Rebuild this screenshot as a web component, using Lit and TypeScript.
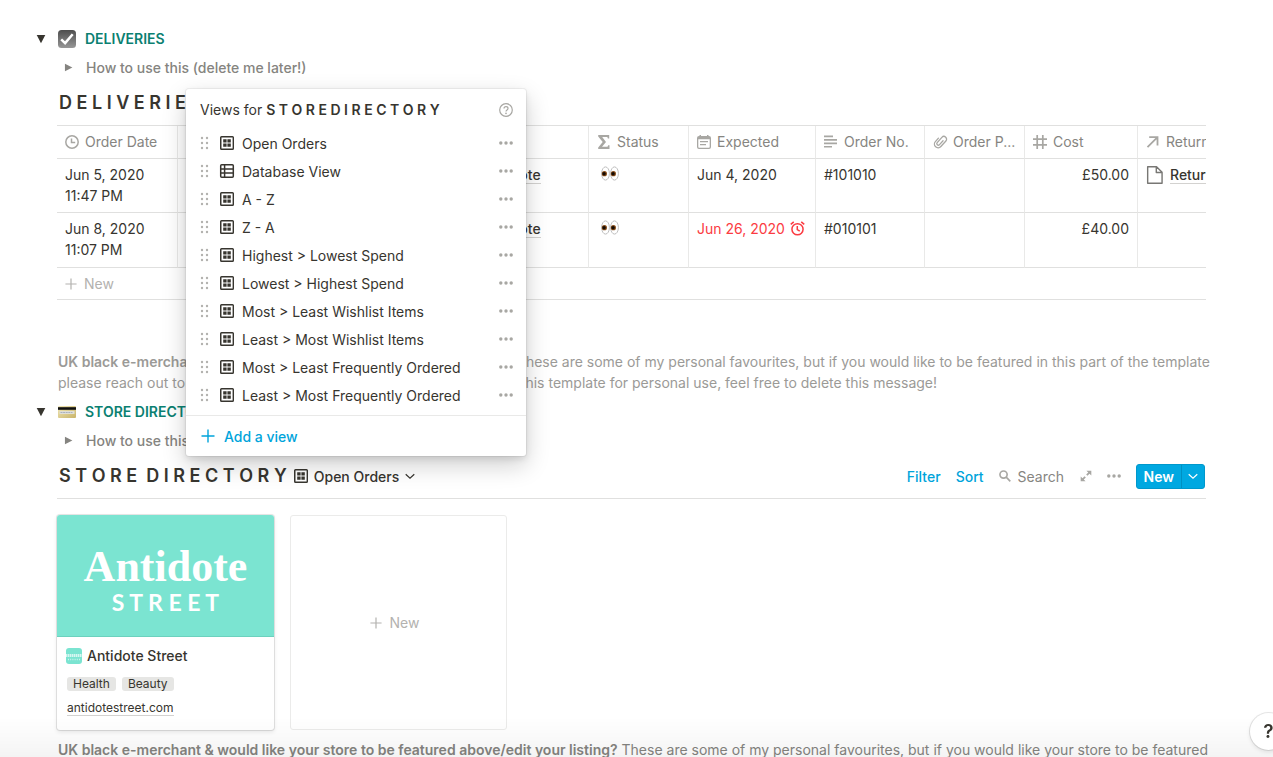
import { LitElement, html, svg, css, nothing } from "lit";
import { customElement, property, state } from "lit/decorators.js";

const glyphs: Record<string, unknown> = {
  clock: svg`<g fill="none" stroke="currentColor" stroke-width="1.5"><circle cx="7" cy="7" r="6.2"/><path d="M6.5 3.5v4h3.7"/></g>`,
  sigma: svg`<path fill="currentColor" d="M1.2 0h11v3.4h-1.3l-.6-1.3H5.2L9 6.9 5 11.7h5.5l.7-1.5h1.3V14H1.2v-1.6L5.7 7 1.2 1.6z"/>`,
  calendar: svg`<path fill="currentColor" fill-rule="evenodd" d="M2.5 0H4v1h6V0h1.500v1H12a2 2 0 0 1 2 2v9a2 2 0 0 1-2 2H2a2 2 0 0 1-2-2V3a2 2 0 0 1 2-2h.5zM1.300 4.300v7.800c0 .4.300.7.700.7h10c.4 0 .7-.3.7-.7V4.300zM3 6h8v1.200H3zm0 3h6v1.200H3z"/>`,
  text: svg`<path fill="currentColor" d="M0 1h9v1.700H0zM0 4.500h13v1.700H0zM0 8h13v1.700H0zM0 11.400h8v1.700H0z" transform="translate(0 -.5)"/>`,
  clip: svg`<g fill="none" stroke="currentColor" stroke-width="1.300" stroke-linecap="round" transform="rotate(42 7 7)"><path d="M3.300 5.200v4.600a3.700 3.700 0 0 0 7.400 0V2.300a2.700 2.700 0 0 0-5.400 0v7a1.500 1.500 0 0 0 3.100 0V4"/></g>`,
  hash: svg`<path fill="none" stroke="currentColor" stroke-width="1.700" d="M4.200 0v14M9.800 0v14M0 4.200h14M0 9.800h14"/>`,
  arrow: svg`<path fill="none" stroke="currentColor" stroke-width="1.800" d="M3.200 2.200h8.300v8.300M11.300 2.400L1.500 12.200"/>`,
  gallery: svg`<path fill="currentColor" fill-rule="evenodd" d="M1.500 0h11A1.500 1.500 0 0 1 14 1.500v11a1.500 1.500 0 0 1-1.500 1.500h-11A1.500 1.500 0 0 1 0 12.500v-11A1.500 1.500 0 0 1 1.500 0zm0 1.400v11.200h11.100V1.400z"/><path fill="currentColor" d="M3.200 3.200h3.400v3.400H3.200zM7.400 3.200h3.400v3.400H7.400zM3.200 7.400h3.400v3.400H3.200zM7.400 7.400h3.400v3.400H7.400z"/>`,
  table: svg`<g fill="none" stroke="currentColor" stroke-width="1.500"><rect x=".7" y=".7" width="12.600" height="12.600" rx="1"/><path d="M.7 5h12.600M.7 9.100h12.600M4.600.7v12.600"/></g>`,
  grip: svg`<g fill="currentColor"><circle cx="4" cy="2" r="1.200"/><circle cx="4" cy="7" r="1.200"/><circle cx="4" cy="12" r="1.200"/><circle cx="9" cy="2" r="1.200"/><circle cx="9" cy="7" r="1.200"/><circle cx="9" cy="12" r="1.200"/></g>`,
  dots: svg`<g fill="currentColor"><circle cx="1.800" cy="7" r="1.700"/><circle cx="7" cy="7" r="1.700"/><circle cx="12.200" cy="7" r="1.700"/></g>`,
  help: svg`<g fill="none" stroke="currentColor" stroke-width="1.200"><circle cx="7" cy="7" r="6.300"/><path d="M5 5.600c0-2.600 4-2.500 4-.1 0 1.500-2 1.500-2 3"/></g><circle cx="7" cy="10.300" r=".85" fill="currentColor"/>`,
  plus: svg`<path fill="none" stroke="currentColor" stroke-width="1.400" d="M7 .5v13M.5 7h13"/>`,
  chevron: svg`<path fill="none" stroke="currentColor" stroke-width="1.700" d="M1 4.500l6 5.500 6-5.500"/>`,
  search: svg`<g fill="none" stroke="currentColor" stroke-width="1.900"><circle cx="5.300" cy="5.300" r="4.200"/><path d="M8.400 8.400l4.800 4.800"/></g>`,
  expand: svg`<path fill="currentColor" d="M7.500.8h5.700v5.700l-2.100-2.100-2.400 2.400-1.500-1.500 2.400-2.400zM6.500 13.200H.8V7.500l2.100 2.100 2.400-2.400 1.500 1.500-2.400 2.400z"/>`,
  alarm: svg`<g fill="none" stroke="currentColor" stroke-width="1.400"><circle cx="7" cy="7.700" r="5.200"/><path d="M6.800 4.700v3.400l2.300 1.400M.7 3.200L3.500.8M13.300 3.200L10.500.8"/></g>`,
  page: svg`<path fill="none" stroke="currentColor" stroke-width="1.100" stroke-linejoin="round" d="M1.300.6h6.900l4.300 4.300v8.500H1.300zM8 .8v4.300h4.300"/>`,
  down: svg`<path fill="currentColor" d="M1 1.500h12L7 13z"/>`,
  right: svg`<path fill="currentColor" d="M1.500 1v12L13 7z"/>`,
};

@customElement("ui-icon")
export class UiIcon extends LitElement {
  @property() name = "";
  @property({ type: Number }) size = 14;

  static styles = css`
    :host { display: inline-flex; flex: none; }
    svg { display: block; overflow: visible; }
  `;

  render() {
    return html`<svg width=${this.size} height=${this.size} viewBox="0 0 14 14" aria-hidden="true">${glyphs[this.name]}</svg>`;
  }
}

const columns = [
  { icon: "clock", label: "Order Date", cls: "c-date" },
  { icon: "text", label: "Item", cls: "c-item" },
  { icon: "arrow", label: "Store", cls: "c-store" },
  { icon: "sigma", label: "Status", cls: "c-status" },
  { icon: "calendar", label: "Expected", cls: "c-expected" },
  { icon: "text", label: "Order No.", cls: "c-number" },
  { icon: "clip", label: "Order P...", cls: "c-status" },
  { icon: "hash", label: "Cost", cls: "c-cost" },
  { icon: "arrow", label: "Return", cls: "c-return" },
];

const orders = [
  { day: "Jun 5, 2020", time: "11:47 PM", store: "Antidote", expected: "Jun 4, 2020", late: false, no: "#101010", cost: "£50.00", ret: "Return" },
  { day: "Jun 8, 2020", time: "11:07 PM", store: "Antidote", expected: "Jun 26, 2020", late: true, no: "#010101", cost: "£40.00", ret: "" },
];

const views = [
  "Open Orders",
  "Database View",
  "A - Z",
  "Z - A",
  "Highest > Lowest Spend",
  "Lowest > Highest Spend",
  "Most > Least Wishlist Items",
  "Least > Most Wishlist Items",
  "Most > Least Frequently Ordered",
  "Least > Most Frequently Ordered",
];

const eyes = html`<svg class="eyes" width="18" height="15" viewBox="0 0 18 15" role="img" aria-label="Eyes">
  <g fill="#fff" stroke="#b9b9b9" stroke-width=".9"><ellipse cx="4.500" cy="7.500" rx="3.900" ry="6.600"/><ellipse cx="13.500" cy="7.500" rx="3.900" ry="6.600"/></g>
  <g fill="#8a4f1a"><circle cx="3.400" cy="7.700" r="2.600"/><circle cx="12.400" cy="7.700" r="2.600"/></g>
  <g fill="#140b04"><circle cx="3.100" cy="7.700" r="1.700"/><circle cx="12.100" cy="7.700" r="1.700"/></g>
</svg>`;

const checkBadge = html`<svg width="18" height="18" viewBox="0 0 18 18" aria-hidden="true">
  <defs><linearGradient id="badge" x2="0" y2="1"><stop stop-color="#4d4d4d"/><stop offset="1" stop-color="#979797"/></linearGradient></defs>
  <rect width="18" height="18" rx="3.500" fill="url(#badge)"/>
  <path d="M3.200 9.300l3.900 3.800 7.600-8.900" fill="none" stroke="#fff" stroke-width="2.500"/>
</svg>`;

const creditCard = html`<svg width="18" height="12" viewBox="0 0 18 12" aria-hidden="true">
  <defs><linearGradient id="card" x2="1" y2="1"><stop stop-color="#f0e6b4"/><stop offset="1" stop-color="#c9b46a"/></linearGradient></defs>
  <rect width="18" height="12" rx="1" fill="url(#card)"/>
  <rect y="1.200" width="18" height="2.600" fill="#111"/>
  <rect x="1.500" y="5" width="15" height="3" fill="#e0dfd6"/>
  <path d="M2.500 6.500h12" stroke="#a9b1bd" stroke-width="1.200" stroke-dasharray="2 .6"/>
</svg>`;

@customElement("app-root")
export class AppRoot extends LitElement {
  @state() private menuOpen = true;

  static styles = css`
    :host {
      display: block;
      height: 100vh;
      overflow: hidden auto;
      scrollbar-width: none;
      background: #fff;
      color: #37352f;
      font: 14px/21px Inter, "Liberation Sans", sans-serif;
    }
    * { box-sizing: border-box; }
    button { font: inherit; color: inherit; background: none; border: 0; padding: 0; margin: 0; cursor: pointer; display: inline-flex; align-items: center; }
    a { color: inherit; text-decoration: none; }
    h2, h3, p { margin: 0; font-size: inherit; font-weight: inherit; }
    .page { padding: 28px 67px 0 36px; }
    .body { padding-left: 21px; }
    .toggle { display: flex; align-items: center; height: 21px; }
    .toggle .lead { width: 22px; }
    .toggle h2 { display: flex; align-items: center; gap: 9px; color: #0b8071; font-weight: 600; }
    .howto { display: flex; align-items: center; margin: 8px 0 0 7px; color: #858480; font-weight: 500; gap: 13px; }
    .title { font-size: 18px; line-height: 24px; font-weight: 600; white-space: nowrap; padding-left: 2px; }
    .deliveries { margin-top: 13px; }

    .scroller { overflow: hidden; margin-top: 10px; border-top: 1px solid #e0e0df; }
    table { table-layout: fixed; width: 1200px; border-collapse: separate; border-spacing: 0; }
    th, td { border-bottom: 1px solid #e0e0df; border-right: 1px solid #e9e9e8; text-align: left; vertical-align: top; padding: 5px 8px 0; }
    th { height: 33px; font-weight: 400; color: #868581; white-space: nowrap; }
    .th { display: flex; align-items: center; gap: 6px; }
    .th ui-icon { color: #a8a7a3; }
    td { height: 54px; }
    tr.last td { height: 55px; }
    .c-date { width: 121px; }
    .c-item { width: 274px; }
    .c-store { width: 137px; }
    .c-status { width: 100px; }
    .c-expected { width: 127px; }
    .c-number { width: 109px; }
    .c-cost { width: 113px; }
    .c-return { width: 119px; }
    .cost { text-align: right; }
    .link { display: flex; align-items: center; height: 21px; gap: 6px; font-weight: 500; }
    .link ui-icon { color: #787774; }
    .link a { border-bottom: 1px solid #d3d2d0; line-height: 17px; }
    .eyes { display: block; margin: 2px 0 0 4px; }
    .due { display: flex; align-items: center; gap: 5px; }
    .late { color: #fb3b42; }
    .add { width: 100%; height: 32px; gap: 7px; padding-left: 8px; color: #b3b2af; border-bottom: 1px solid #e0e0df; }

    .note { margin-top: 51px; color: #9b9a97; padding-left: 1px; white-space: nowrap; }
    .note b, .foot b { font-weight: 600; }
    .directory { margin-top: 8px; }
    .head { position: relative; display: flex; align-items: center; height: 45px; border-bottom: 1px solid #e0e0df; gap: 7px; margin-top: 3px; }
    .current { gap: 6px; font-weight: 500; }
    .tools { display: flex; align-items: center; margin-left: auto; gap: 15px; color: #a8a7a3; }
    .blue { color: #00a4db; font-weight: 500; }
    .search { display: flex; align-items: center; gap: 7px; }
    .search input { font: inherit; border: 0; padding: 0; width: 47px; background: none; outline: none; }
    .search input::placeholder { color: #868581; opacity: 1; }
    .new { display: flex; height: 25px; border-radius: 3px; background: #00a8e1; color: #fff; font-weight: 600; border: 1px solid #0098cc; margin-right: 1px; }
    .new button { padding: 0 7px; }
    .new .more { padding: 0 6px; border-left: 1px solid #0090c2; }

    .menu { position: absolute; left: 129px; bottom: 42px; width: 340px; background: #fff; border-radius: 3px; font-weight: 400;
      box-shadow: 0 0 0 1px rgba(15,15,15,.05), 0 3px 6px rgba(15,15,15,.1), 0 9px 24px rgba(15,15,15,.2); z-index: 2; }
    .menu header { display: flex; align-items: center; justify-content: space-between; padding: 10px 13px 9px 14px; }
    .menu b { font-weight: 600; }
    .menu header button, .menu .opts { color: #a8a7a3; }
    .menu ul { list-style: none; margin: 0; padding: 0 0 6px; }
    .menu li { display: flex; align-items: center; height: 28px; padding: 0 13px 0 12px; }
    .grip { color: #b3b2af; cursor: grab; }
    .menu .view { flex: 1; gap: 8px; margin-left: 8px; }
    .menu .addview { width: 100%; height: 41px; border-top: 1px solid #e9e9e8; padding-left: 15px; gap: 9px; }

    .cards { display: grid; grid-template-columns: repeat(auto-fill, 217px); gap: 16px; margin-top: 16px; }
    .card, .blank { min-height: 215px; border-radius: 3px; }
    .card { box-shadow: 0 0 0 1px rgba(15,15,15,.1), 0 2px 4px rgba(15,15,15,.1); overflow: hidden; }
    .blank { border: 1px solid #ebebea; justify-content: center; gap: 8px; padding-right: 8px; color: #b3b2af; }
    .cover { height: 122px; background: #7be4d1; border-bottom: 1px solid #6cd1be; color: #fff; text-align: center; padding-top: 28px; }
    .brand { font: bold 44px/48px "Liberation Serif", serif; }
    .street { font: bold 23px/22px Lato, sans-serif; }
    .info { padding: 8px 10px; }
    .name { display: flex; align-items: center; gap: 5px; font-weight: 500; margin-left: -1px; }
    .thumb { width: 16px; height: 16px; }
    .tags { display: flex; gap: 6px; margin-top: 11px; font-size: 12px; line-height: 14px; }
    .tag { background: #e6e6e4; border-radius: 3px; padding: 0 6px; }
    .site { display: inline-block; font-size: 12px; line-height: 15px; margin-top: 9px; border-bottom: 1px solid #d3d2d0; }
    .foot { margin-top: 9px; padding-left: 1px; color: #858480; white-space: nowrap; }
    .fade { position: fixed; inset: auto 0 0; height: 40px; pointer-events: none; background: linear-gradient(rgba(0,0,0,0), rgba(0,0,0,.045)); }
    .assist { position: fixed; right: -14px; bottom: 7px; width: 37px; height: 37px; border-radius: 50%; background: #fff; justify-content: center; font-size: 19px; font-weight: 600;
      box-shadow: 0 0 0 1px rgba(15,15,15,.1), 0 2px 4px rgba(15,15,15,.1); }
  `;

  private toggle(icon: unknown, label: string) {
    return html`<div class="toggle">
        <button class="lead" aria-label="Collapse"><ui-icon name="down" size="10"></ui-icon></button>
        <h2>${icon}${label}</h2>
      </div>
      <div class="body">
        <button class="howto"><ui-icon name="right" size="9"></ui-icon>How to use this (delete me later!)</button>
      </div>`;
  }

  private orders() {
    return html`<div class="scroller">
      <table>
        <thead><tr>${columns.map((c) => html`<th class=${c.cls} scope="col"><span class="th"><ui-icon name=${c.icon}></ui-icon>${c.label}</span></th>`)}</tr></thead>
        <tbody>${orders.map((o, i) => html`<tr class=${i === orders.length - 1 ? "last" : ""}>
          <td>${o.day}<br>${o.time}</td>
          <td></td>
          <td><span class="link"><ui-icon name="page" size="18"></ui-icon><a href="#store">${o.store}</a></span></td>
          <td>${eyes}</td>
          <td><span class="due ${o.late ? "late" : ""}">${o.expected}${o.late ? html`<ui-icon name="alarm" size="15"></ui-icon>` : nothing}</span></td>
          <td>${o.no}</td>
          <td></td>
          <td class="cost">${o.cost}</td>
          <td>${o.ret ? html`<span class="link"><ui-icon name="page" size="18"></ui-icon><a href="#return">${o.ret}</a></span>` : nothing}</td>
        </tr>`)}</tbody>
      </table>
      <button class="add"><ui-icon name="plus" size="12"></ui-icon>New</button>
    </div>`;
  }

  private menu() {
    return html`<div class="menu">
      <header><span>Views for <b>S T O R E D I R E C T O R Y</b></span><button aria-label="Help"><ui-icon name="help"></ui-icon></button></header>
      <ul>${views.map((v, i) => html`<li>
        <ui-icon class="grip" name="grip"></ui-icon>
        <button class="view"><ui-icon name=${i === 1 ? "table" : "gallery"}></ui-icon>${v}</button>
        <button class="opts" aria-label="Options"><ui-icon name="dots"></ui-icon></button>
      </li>`)}</ul>
      <button class="addview blue"><ui-icon name="plus"></ui-icon>Add a view</button>
    </div>`;
  }

  render() {
    return html`<main class="page">
      ${this.toggle(checkBadge, "DELIVERIES")}
      <section class="body">
        <h3 class="title deliveries">D E L I V E R I E S</h3>
        ${this.orders()}
        <p class="note"><b>UK black e-merchant &amp; would like your store to be featured in here?</b> These are some of my personal favourites, but if you would like to be featured in this part of the template<br>please reach out to me and I'll add your listing. If you have purchased this template for personal use, feel free to delete this message!</p>
      </section>
      <div class="directory">${this.toggle(creditCard, "STORE DIRECTORY")}</div>
      <section class="body">
        <div class="head">
          <h3 class="title">S T O R E &nbsp;D I R E C T O R Y</h3>
          <button class="current" aria-expanded=${this.menuOpen} @click=${() => (this.menuOpen = !this.menuOpen)}>
            <ui-icon name="gallery"></ui-icon>Open Orders<ui-icon name="chevron" size="10"></ui-icon>
          </button>
          ${this.menuOpen ? this.menu() : nothing}
          <div class="tools">
            <button class="blue">Filter</button>
            <button class="blue">Sort</button>
            <label class="search"><ui-icon name="search" size="12"></ui-icon><input type="text" placeholder="Search" aria-label="Search"></label>
            <button aria-label="Open full page"><ui-icon name="expand" size="12"></ui-icon></button>
            <button aria-label="More"><ui-icon name="dots"></ui-icon></button>
            <div class="new"><button>New</button><button class="more" aria-label="Templates"><ui-icon name="chevron" size="10"></ui-icon></button></div>
          </div>
        </div>
        <div class="cards">
          <article class="card">
            <div class="cover"><div class="brand">Antidote</div><div class="street">S T R E E T</div></div>
            <div class="info">
              <div class="name"><svg class="thumb" viewBox="0 0 16 16" aria-hidden="true"><rect width="16" height="16" rx="3" fill="#7be4d1"/><path d="M0 7.500h16" stroke="#fff" stroke-width="3" stroke-dasharray="1.500 .5" opacity=".7"/><path d="M2 11.500h12" stroke="#fff" stroke-width="1.500" stroke-dasharray="1 1.200" opacity=".6"/></svg>Antidote Street</div>
              <div class="tags"><span class="tag">Health</span><span class="tag">Beauty</span></div>
              <a class="site" href="#site">antidotestreet.com</a>
            </div>
          </article>
          <button class="blank"><ui-icon name="plus" size="12"></ui-icon>New</button>
        </div>
        <p class="foot"><b>UK black e-merchant &amp; would like your store to be featured above/edit your listing?</b> These are some of my personal favourites, but if you would like your store to be featured</p>
      </section>
      <div class="fade"></div>
      <button class="assist" aria-label="Help and support">?</button>
    </main>`;
  }
}
